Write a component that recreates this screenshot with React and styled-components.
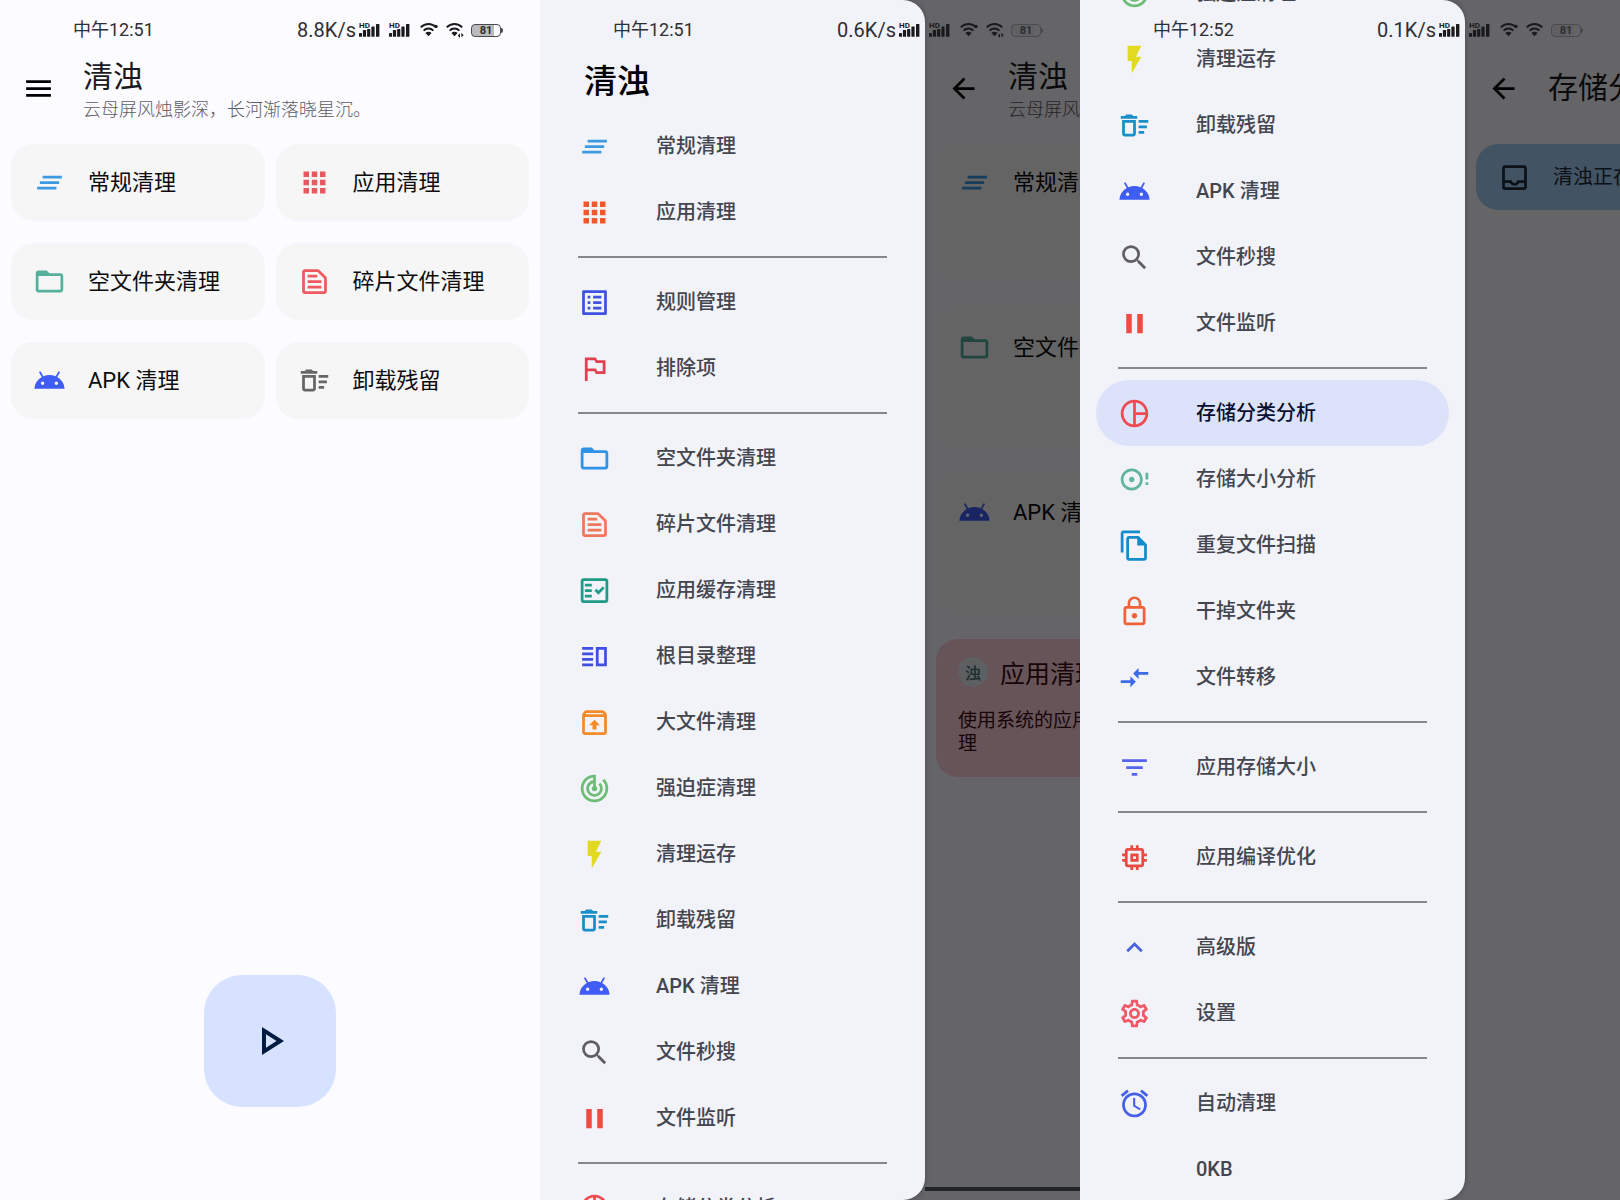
import React, { useLayoutEffect, useRef } from "react";
import styled, { createGlobalStyle } from "styled-components";
import {
  MdAndroid,
  MdApps,
  MdArrowBack,
  MdClearAll,
  MdCompareArrows,
  MdFilterList,
  MdFlashOn,
  MdFolderOpen,
  MdKeyboardArrowUp,
  MdLockOutline,
  MdMenu,
  MdOutlineAccessAlarm,
  MdOutlineDeleteSweep,
  MdOutlineDiscFull,
  MdOutlineFactCheck,
  MdOutlineFileCopy,
  MdOutlineInbox,
  MdOutlineListAlt,
  MdOutlineMemory,
  MdOutlinePieChartOutline,
  MdOutlinePlayArrow,
  MdOutlineSettings,
  MdOutlineTextSnippet,
  MdOutlineUnarchive,
  MdOutlineVerticalSplit,
  MdOutlinedFlag,
  MdPause,
  MdSearch,
  MdTrackChanges,
} from "react-icons/md";

const GlobalStyle = createGlobalStyle`
  *, *::before, *::after { box-sizing: border-box; }
  body {
    margin: 0;
    background: #fcfbff;
    color: #1b1b1f;
    font-family: Roboto, "Noto Sans CJK SC", sans-serif;
  }
  button { font: inherit; }
`;

/* ---------- screen frame ---------- */

const Screens = styled.main`
  display: grid;
  grid-template-columns: repeat(3, minmax(0, 1fr));
  height: 100vh;
`;

const Screen = styled.section`
  position: relative;
  display: flex;
  min-width: 0;
  overflow: hidden;
  background: ${(p) => (p.$dimmed ? "#646365" : "#fcfbff")};
`;

const StatusBar = styled.header`
  position: absolute;
  inset: 0 0 auto 0;
  z-index: 3;
  display: flex;
  align-items: center;
  height: 60px;
  padding: 0 37px 0 73px;
  font-size: 18px;
  line-height: 24px;
  color: #2f2f33;
`;

const Speed = styled.span`
  margin-left: auto;
  margin-right: 3px;
  font-size: 20px;
`;

const StatusIcons = styled.div`
  display: flex;
  align-items: center;
  gap: 6px;
  color: #1a1a1d;
`;

const Battery = styled.span`
  position: relative;
  width: 30px;
  height: 13px;
  margin-right: 2px;
  border: 1px solid #4a4a4f;
  border-radius: 4px;
  background: linear-gradient(90deg, rgba(90, 90, 95, 0.4) 80%, transparent 80%);
  font-size: 11px;
  font-weight: 700;
  line-height: 12px;
  text-align: center;
  color: #2c2c30;

  &::after {
    content: "";
    position: absolute;
    top: 3px;
    right: -3px;
    width: 2px;
    height: 5px;
    border-radius: 0 2px 2px 0;
    background: #4a4a4f;
  }
`;

function Signal() {
  return (
    <svg width="24" height="16" viewBox="1 0 24 16" fill="currentColor" aria-hidden="true">
      <text x="1" y="6" fontSize="8" fontWeight="700" fontFamily="Roboto, sans-serif">HD</text>
      <rect x="1" y="11" width="3" height="3.8" rx="0.6" />
      <rect x="4.9" y="8" width="3.2" height="6.8" rx="0.6" />
      <rect x="9.1" y="7" width="3.2" height="7.8" rx="0.6" />
      <rect x="13.4" y="4.5" width="3.2" height="10.3" rx="0.6" />
      <rect x="18" y="2" width="3.4" height="12.8" rx="0.6" />
    </svg>
  );
}

function Wifi({ badge }) {
  return (
    <svg width="20" height="16" viewBox="-1 0 20 16" fill="none" stroke="currentColor" strokeWidth="2" aria-hidden="true">
      <path d="M0.8 5.4C5.2 1 11.8 1 16.2 5.4" />
      <path d="M3.6 8.6C6.4 5.8 10.6 5.8 13.4 8.6" />
      <path d="M8.5 14.2L5.4 10.9C7.2 9.4 9.8 9.4 11.6 10.9Z" fill="currentColor" stroke="none" />
      {badge === "plus" && <circle cx="16" cy="4.4" r="1.7" fill="currentColor" stroke="none" />}
      {badge === "data" && (
        <path d="M14 11.4V16L11.8 13.6ZM15.4 10.8L17.6 13.2L15.4 15.2Z" fill="currentColor" stroke="none" />
      )}
    </svg>
  );
}

function PhoneStatus({ time, speed, transfer }) {
  return (
    <StatusBar>
      <time>{time}</time>
      <Speed>{speed}</Speed>
      <StatusIcons>
        <Signal />
        <Signal />
        <Wifi badge="plus" />
        <Wifi badge={transfer ? "data" : undefined} />
        <Battery>81</Battery>
      </StatusIcons>
    </StatusBar>
  );
}

/* ---------- app content ---------- */

const AppPane = styled.div`
  position: relative;
  flex: 1 0 100%;
  display: flex;
  flex-direction: column;
  min-width: 0;
  background: #fcfbff;
`;

const Scrim = styled.div`
  position: absolute;
  inset: 0;
  z-index: 1;
  background: rgba(0, 0, 0, 0.6);
`;

const AppBar = styled.div`
  display: flex;
  align-items: center;
  gap: 28px;
  padding: 55px 22px 23px;
`;

const IconButton = styled.button`
  display: flex;
  padding: 0;
  border: 0;
  background: none;
  color: #000;
`;

const Titles = styled.div`
  display: flex;
  flex-direction: column;
  justify-content: center;
  height: 66px;
  white-space: nowrap;
`;

const AppTitle = styled.h1`
  margin: 0;
  font-size: 30px;
  font-weight: 400;
  line-height: 44px;
  color: #1b1b1f;
`;

const Subtitle = styled.p`
  margin: 0;
  font-size: 18px;
  font-weight: 300;
  line-height: 22px;
  color: #5c5c64;
`;

const CardGrid = styled.div`
  display: grid;
  grid-template-columns: repeat(${(p) => p.$columns}, minmax(0, 1fr));
  gap: ${(p) => (p.$tall ? "27px" : "22px")} 11px;
  padding: 0 11px;
`;

const Card = styled.button`
  display: flex;
  align-items: flex-start;
  gap: 22px;
  height: ${(p) => (p.$tall ? "138px" : "77px")};
  padding: 22px;
  border: 0;
  border-radius: 22px;
  background: ${(p) => (p.$tall ? "#f9f9fb" : "#f6f6f7")};
  font-size: 22px;
  line-height: 33px;
  text-align: left;
  white-space: nowrap;
  color: #0c0c0e;
`;

const Notice = styled.article`
  margin: 27px 11px 0;
  padding: 18px 22px 22px;
  border-radius: 22px;
  background: #ffd3dc;
  color: #3b0a16;
  white-space: nowrap;
`;

const NoticeHead = styled.div`
  display: flex;
  align-items: center;
  gap: 12px;
  height: 30px;
  margin-bottom: 22px;
`;

const Avatar = styled.span`
  display: grid;
  place-items: center;
  width: 30px;
  height: 30px;
  border-radius: 50%;
  background: #e9eef2;
  font-size: 16px;
  font-weight: 500;
  color: #47707c;
`;

const NoticeTitle = styled.h2`
  margin: 0;
  font-size: 25px;
  font-weight: 400;
`;

const NoticeText = styled.p`
  margin: 0;
  font-size: 19px;
  line-height: 23px;
`;

const Banner = styled.div`
  display: flex;
  align-items: center;
  gap: 22px;
  height: 66px;
  margin: 0 11px;
  padding: 0 22px;
  border-radius: 22px;
  background: #a6d2fa;
  font-size: 20px;
  line-height: 24px;
  white-space: nowrap;
  color: #1d2b3a;
`;

const StartButton = styled.button`
  display: grid;
  place-items: center;
  align-self: center;
  width: 132px;
  height: 132px;
  margin: auto 0 93px;
  padding: 0;
  border: 0;
  border-radius: 38px;
  background: #d6e2ff;
  color: #001a41;
`;

const BottomStrip = styled.div`
  height: 4px;
  margin: auto 0 9px;
  background: #555f6c;
`;

const mainCards = [
  { label: "常规清理", icon: MdClearAll, color: "#3b9ae0" },
  { label: "应用清理", icon: MdApps, color: "#e8595f" },
  { label: "空文件夹清理", icon: MdFolderOpen, color: "#55b09c" },
  { label: "碎片文件清理", icon: MdOutlineTextSnippet, color: "#ee5a60" },
  { label: "APK 清理", icon: MdAndroid, color: "#3f5df5" },
  { label: "卸载残留", icon: MdOutlineDeleteSweep, color: "#666669" },
];

function Cards({ items, columns, tall }) {
  return (
    <CardGrid $columns={columns} $tall={tall}>
      {items.map(({ label, icon: Icon, color }) => (
        <Card key={label} type="button" $tall={tall}>
          <Icon size={33} color={color} />
          {label}
        </Card>
      ))}
    </CardGrid>
  );
}

function Bar({ icon: Icon, action, title, subtitle }) {
  return (
    <AppBar>
      <IconButton type="button" aria-label={action}>
        <Icon size={33} />
      </IconButton>
      <Titles>
        <AppTitle>{title}</AppTitle>
        {subtitle && <Subtitle>{subtitle}</Subtitle>}
      </Titles>
    </AppBar>
  );
}

/* ---------- drawer ---------- */

const DrawerPanel = styled.nav`
  position: relative;
  z-index: 2;
  flex: none;
  width: 385px;
  overflow: hidden;
  background: #f2f2f9;
  border-radius: 0 22px 22px 0;
  box-shadow: 0 0 4px rgba(40, 45, 70, 0.5);
`;

const DrawerTitle = styled.h2`
  margin: 0;
  padding: 60px 44px 10px;
  font-size: 33px;
  font-weight: 500;
  line-height: 43px;
  color: #000;
`;

const DrawerItem = styled.a`
  display: flex;
  align-items: center;
  gap: 45px;
  height: 66px;
  margin: 0 16px;
  padding: 0 22px;
  border-radius: 33px;
  background: ${(p) => (p.$active ? "#dbe2f9" : "transparent")};
  font-size: 20px;
  font-weight: 500;
  line-height: 24px;
  text-decoration: none;
  white-space: nowrap;
  color: ${(p) => (p.$active ? "#0a1030" : "#44464f")};
`;

const IconSlot = styled.span`
  display: flex;
  width: 33px;
  height: 33px;
`;

const Divider = styled.hr`
  height: 2px;
  margin: 11px 38px;
  border: 0;
  background: #85868f;
`;

const DrawerEnd = styled.div`
  height: 40px;
`;

const SEPARATOR = "separator";

const cleanupItems = [
  { label: "强迫症清理", icon: MdTrackChanges, color: "#6dbd76" },
  { label: "清理运存", icon: MdFlashOn, color: "#e2da20" },
  { label: "卸载残留", icon: MdOutlineDeleteSweep, color: "#1a8ec8" },
  { label: "APK 清理", icon: MdAndroid, color: "#3f5df5" },
  { label: "文件秒搜", icon: MdSearch, color: "#5f5f63" },
  { label: "文件监听", icon: MdPause, color: "#f04b40" },
  SEPARATOR,
  { label: "存储分类分析", icon: MdOutlinePieChartOutline, color: "#ee4a4f" },
];

const topItems = [
  { label: "常规清理", icon: MdClearAll, color: "#3b9ae0" },
  { label: "应用清理", icon: MdApps, color: "#f0582e" },
  SEPARATOR,
  { label: "规则管理", icon: MdOutlineListAlt, color: "#3f51e0" },
  { label: "排除项", icon: MdOutlinedFlag, color: "#e04050" },
  SEPARATOR,
  { label: "空文件夹清理", icon: MdFolderOpen, color: "#2f92e6" },
  { label: "碎片文件清理", icon: MdOutlineTextSnippet, color: "#f0775a" },
  { label: "应用缓存清理", icon: MdOutlineFactCheck, color: "#1e9a86" },
  { label: "根目录整理", icon: MdOutlineVerticalSplit, color: "#3f4fe0" },
  { label: "大文件清理", icon: MdOutlineUnarchive, color: "#f58a28" },
  ...cleanupItems,
];

const bottomItems = [
  ...cleanupItems,
  { label: "存储大小分析", icon: MdOutlineDiscFull, color: "#5fb5a0" },
  { label: "重复文件扫描", icon: MdOutlineFileCopy, color: "#128cca" },
  { label: "干掉文件夹", icon: MdLockOutline, color: "#f0623a" },
  { label: "文件转移", icon: MdCompareArrows, color: "#3d6be8" },
  SEPARATOR,
  { label: "应用存储大小", icon: MdFilterList, color: "#5564e8" },
  SEPARATOR,
  { label: "应用编译优化", icon: MdOutlineMemory, color: "#ea4a42" },
  SEPARATOR,
  { label: "高级版", icon: MdKeyboardArrowUp, color: "#4a63dc" },
  { label: "设置", icon: MdOutlineSettings, color: "#ee5a68" },
  SEPARATOR,
  { label: "自动清理", icon: MdOutlineAccessAlarm, color: "#4560e6" },
  { label: "0KB" },
];

function Drawer({ title, items, active, scroll = 0 }) {
  const panel = useRef(null);

  useLayoutEffect(() => {
    panel.current.scrollTop = scroll;
  }, [scroll]);

  return (
    <DrawerPanel ref={panel}>
      {title && <DrawerTitle>{title}</DrawerTitle>}
      {items.map((item, index) => {
        if (item === SEPARATOR) return <Divider key={index} />;
        const Icon = item.icon;
        return (
          <DrawerItem
            key={index}
            href="#"
            $active={item.label === active}
            aria-current={item.label === active ? "page" : undefined}
          >
            <IconSlot>{Icon && <Icon size={33} color={item.color} />}</IconSlot>
            {item.label}
          </DrawerItem>
        );
      })}
      <DrawerEnd />
    </DrawerPanel>
  );
}

/* ---------- page ---------- */

const poem = "云母屏风烛影深，长河渐落晓星沉。";

export default function App() {
  return (
    <>
      <GlobalStyle />
      <Screens>
        <Screen>
          <PhoneStatus time="中午12:51" speed="8.8K/s" transfer />
          <AppPane>
            <Bar icon={MdMenu} action="菜单" title="清浊" subtitle={poem} />
            <Cards items={mainCards} columns={2} />
            <StartButton type="button" aria-label="开始清理">
              <MdOutlinePlayArrow size={48} />
            </StartButton>
          </AppPane>
        </Screen>

        <Screen $dimmed>
          <PhoneStatus time="中午12:51" speed="0.6K/s" transfer />
          <Drawer title="清浊" items={topItems} />
          <AppPane>
            <Bar icon={MdArrowBack} action="返回" title="清浊" subtitle={poem} />
            <Cards items={mainCards.filter((_, i) => i % 2 === 0)} columns={1} tall />
            <Notice>
              <NoticeHead>
                <Avatar>浊</Avatar>
                <NoticeTitle>应用清理</NoticeTitle>
              </NoticeHead>
              <NoticeText>
                使用系统的应用
                <br />理
              </NoticeText>
            </Notice>
            <BottomStrip />
            <Scrim />
          </AppPane>
        </Screen>

        <Screen $dimmed>
          <PhoneStatus time="中午12:52" speed="0.1K/s" />
          <Drawer items={bottomItems} active="存储分类分析" scroll={40} />
          <AppPane>
            <Bar icon={MdArrowBack} action="返回" title="存储分类分析" />
            <Banner>
              <MdOutlineInbox size={33} />
              清浊正在
            </Banner>
            <Scrim />
          </AppPane>
        </Screen>
      </Screens>
    </>
  );
}
